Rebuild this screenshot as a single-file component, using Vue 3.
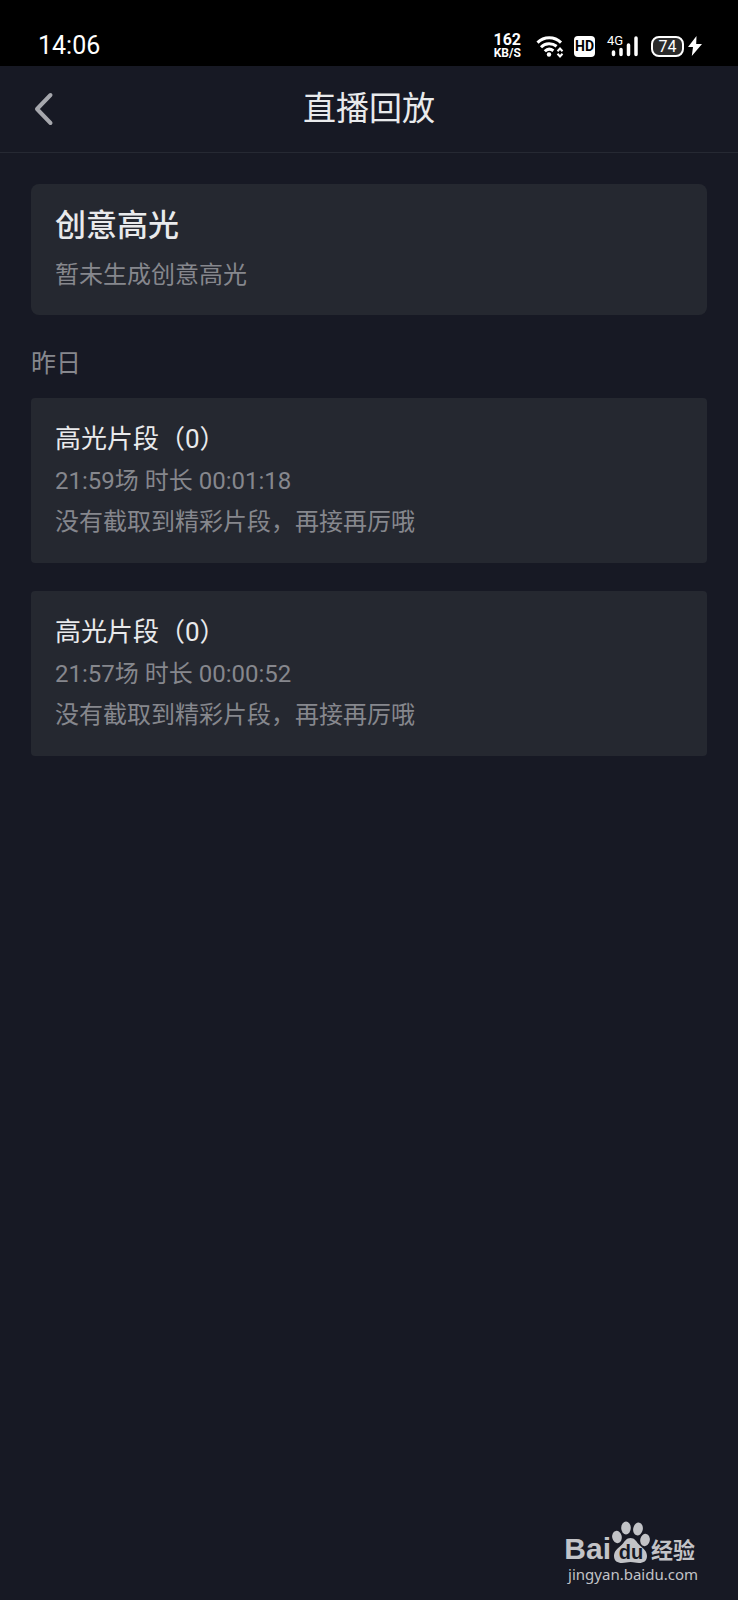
<script setup>
const sessions = [
  { id: 1, count: 0, start: '21:59', duration: '00:01:18' },
  { id: 2, count: 0, start: '21:57', duration: '00:00:52' },
]
</script>

<template>
  <div class="screen">
    <div class="status">
      <time class="clock">14:06</time>
      <div class="indicators">
        <div class="speed"><b>162</b><span>KB/S</span></div>
        <svg class="wifi" width="28" height="23" viewBox="0 0 28 23" fill="none" stroke="#fff" stroke-width="3">
          <path d="M1.500 7.600C8 1 18.500 1 25 7.600" />
          <path d="M5 12.200C9.500 7.700 16 7.700 20.600 11.200" />
          <path d="M8.800 16.200C11.400 13.600 14.600 13.600 17.400 15.800" />
          <circle cx="13" cy="19.500" r="2.200" fill="#fff" stroke="none" />
          <path d="M21.500 16.200 24 13.500l2.500 2.700M21.500 18.800 24 21.500l2.500-2.700" stroke-width="2" />
        </svg>
        <span class="hd">HD</span>
        <div class="signal">
          <span class="net">4G</span>
          <svg width="31" height="22" viewBox="0 0 31 22" stroke="#fff" stroke-width="3.500" stroke-linecap="round">
            <path d="M6.500 17v2.500M14 14.500v5M21.500 10v9.500M29 3v16.500" />
          </svg>
        </div>
        <div class="power">
          <span class="battery">74</span>
          <svg width="14" height="20" viewBox="0 0 14 20" fill="#fff"><path d="M8.500 0 0 11h5L3.800 20 14 8H8.200z" /></svg>
        </div>
      </div>
    </div>

    <header class="bar">
      <button class="back" type="button" aria-label="返回">
        <svg width="20" height="34" viewBox="0 0 20 34" fill="none" stroke="#a6a7ad" stroke-width="4" stroke-linecap="round" stroke-linejoin="round">
          <path d="M16.500 3 3 17l13.500 14" />
        </svg>
      </button>
      <h1>直播回放</h1>
    </header>

    <main>
      <section class="highlight">
        <h2>创意高光</h2>
        <p>暂未生成创意高光</p>
      </section>
      <h3 class="day">昨日</h3>
      <div class="list">
        <article v-for="s in sessions" :key="s.id" class="session">
          <h4>高光片段（{{ s.count }}）</h4>
          <p>{{ s.start }}场 时长 {{ s.duration }}</p>
          <p>没有截取到精彩片段，再接再厉哦</p>
        </article>
      </div>
    </main>

    <footer class="mark">
      <div class="brand">
        <span class="bai">Bai</span>
        <span class="paw">
          <svg width="40" height="42" viewBox="0 0 40 42" fill="#c2c3c7">
            <ellipse cx="6" cy="16" rx="4.800" ry="6.200" transform="rotate(-12 6 16)" />
            <ellipse cx="15" cy="7" rx="4.800" ry="6.500" />
            <ellipse cx="27" cy="8" rx="4.800" ry="6.500" transform="rotate(12 27 8)" />
            <ellipse cx="34" cy="19" rx="4.800" ry="6.200" transform="rotate(12 34 19)" />
            <path d="M19.500 17c4 0 5.500 3 8 6 3 3.500 8.500 6 8.500 12 0 5-3.500 7-8 7-3.500 0-5-1-8.500-1s-5 1-8.500 1c-4.500 0-8-2-8-7 0-6 5.500-8.500 8.500-12 2.500-3 4-6 8-6z" />
          </svg>
          <span class="du">du</span>
        </span>
        <span class="jy">经验</span>
      </div>
      <a href="#">jingyan.baidu.com</a>
    </footer>
  </div>
</template>

<style>
body {
  background: #171924;
}
</style>

<style scoped>
.screen {
  display: flex;
  flex-direction: column;
  min-height: 100vh;
  background: #171924;
  font-family: Roboto, "Noto Sans CJK SC", sans-serif;
  color: #e9eaec;
}
h1, h2, h3, h4, p {
  margin: 0;
  font-weight: 400;
}
svg {
  display: block;
  flex: none;
}
.status {
  display: flex;
  justify-content: space-between;
  align-items: center;
  height: 40px;
  padding: 26px 36px 0 38px;
  background: #000;
  color: #fff;
}
.clock {
  font-size: 25px;
  line-height: 40px;
}
.indicators {
  display: flex;
  align-items: center;
}
.speed {
  display: flex;
  flex-direction: column;
  align-items: center;
  margin-right: 15px;
}
.speed b {
  font-size: 16px;
  line-height: 14px;
}
.speed span {
  font-size: 12px;
  font-weight: 700;
  line-height: 12px;
}
.wifi {
  margin-right: 10px;
}
.hd {
  width: 21px;
  margin-right: 12px;
  border-radius: 4px;
  background: #fff;
  color: #000;
  font-size: 14px;
  font-weight: 700;
  line-height: 21px;
  text-align: center;
}
.signal {
  position: relative;
  margin-right: 13px;
}
.net {
  position: absolute;
  left: 0;
  top: 0;
  font-size: 13px;
  line-height: 12px;
}
.power {
  display: flex;
  align-items: center;
  gap: 4px;
}
.battery {
  width: 29px;
  border: 2px solid #fff;
  border-radius: 8px;
  background: #2b2b2b;
  font-size: 16px;
  line-height: 17px;
  text-align: center;
}
.bar {
  display: grid;
  grid-template-columns: 64px 1fr 64px;
  align-items: center;
  height: 86px;
  border-bottom: 1px solid #262933;
}
.back {
  display: flex;
  height: 64px;
  padding: 0 0 0 34px;
  align-items: center;
  border: 0;
  background: none;
}
h1 {
  font-size: 33px;
  line-height: 48px;
  text-align: center;
}
main {
  padding: 31px;
}
.highlight {
  padding: 18px 24px 15px;
  border-radius: 8px;
  background: #252830;
}
h2 {
  font-size: 31px;
  font-weight: 500;
  line-height: 48px;
}
p {
  color: #86878d;
  font-size: 24px;
  line-height: 41px;
}
.highlight p {
  line-height: 50px;
}
.day {
  padding: 33px 0 18px;
  color: #86878d;
  font-size: 25px;
  line-height: 32px;
}
.list {
  display: grid;
  gap: 28px;
}
.session {
  padding: 19px 24px 20px;
  border-radius: 4px;
  background: #252830;
}
h4 {
  font-size: 26px;
  line-height: 44px;
}
.mark {
  display: flex;
  flex-direction: column;
  align-items: flex-end;
  margin-top: auto;
  padding: 0 40px 15px;
  color: #c2c3c7;
}
.brand {
  display: flex;
  align-items: flex-end;
  padding-right: 3px;
}
.bai {
  font: 700 30px/28px "Liberation Sans", sans-serif;
}
.paw {
  position: relative;
}
.du {
  position: absolute;
  left: 0;
  right: 0;
  bottom: 0;
  color: #171924;
  font: 700 20px/22px "Liberation Sans", sans-serif;
  text-align: center;
}
.jy {
  font-size: 22px;
  font-weight: 700;
  line-height: 24px;
}
.mark a {
  color: inherit;
  font: 15px/22px "Noto Sans", sans-serif;
  text-decoration: none;
}
</style>
